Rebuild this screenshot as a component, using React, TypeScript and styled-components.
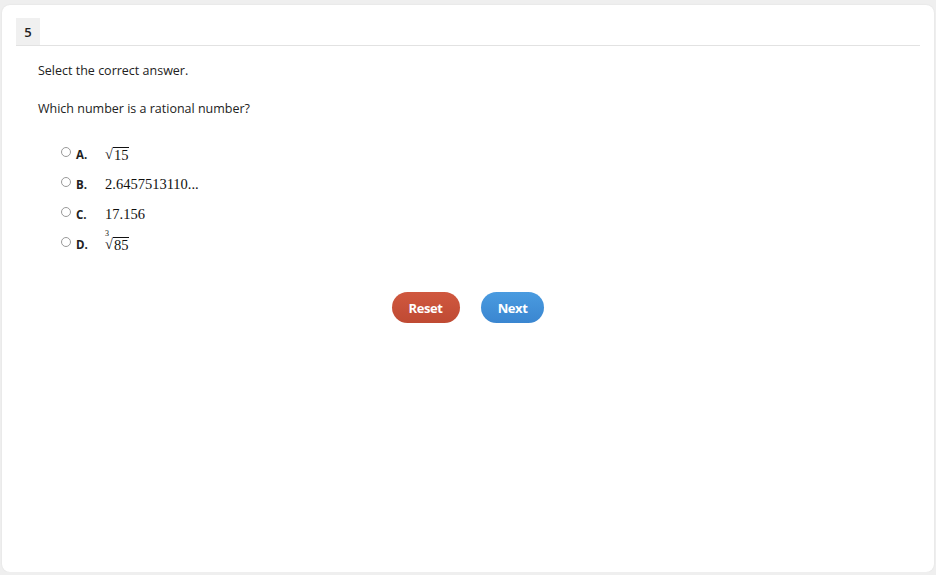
import styled, { createGlobalStyle } from "styled-components";

const GlobalStyle = createGlobalStyle`
  html, body {
    margin: 0;
    padding: 0;
    background: #efefef;
  }
  body {
    font-family: "Open Sans", "Liberation Sans", sans-serif;
    color: #222;
  }
`;

const Card = styled.div`
  margin: 5px 2px 0;
  height: 567px;
  background: #fff;
  border-radius: 8px;
  box-shadow: 0 0 2px rgba(0, 0, 0, 0.08);
  padding: 13px 14px 0;
  box-sizing: border-box;
`;

const Header = styled.div`
  display: flex;
  border-bottom: 1px solid #e2e2e2;
`;

const QNumber = styled.div`
  width: 24px;
  height: 27px;
  background: #f0f0f0;
  font-size: 13px;
  font-weight: 600;
  display: flex;
  align-items: center;
  justify-content: center;
  color: #222;
`;

const Body = styled.div`
  padding: 16px 22px 0;
`;

const Prompt = styled.p`
  margin: 0 0 20px;
  font-size: 12.5px;
  line-height: 18px;
  color: #222;
`;

const Options = styled.div`
  display: flex;
  flex-direction: column;
  gap: 10px;
  padding: 6px 0 0 23px;
`;

const Option = styled.label`
  display: flex;
  align-items: center;
  height: 20px;
`;

const Radio = styled.span`
  width: 10px;
  height: 10px;
  border: 1px solid #9a9a9a;
  border-radius: 50%;
  box-sizing: border-box;
  margin-right: 5px;
  margin-top: -4px;
`;

const Letter = styled.span`
  width: 29px;
  font-size: 11.5px;
  font-weight: 700;
  color: #222;
`;

const MathText = styled.span`
  font-family: "Liberation Serif", "DejaVu Serif", serif;
  font-size: 14.5px;
  color: #111;
  display: inline-flex;
  align-items: flex-end;
  position: relative;
`;

const Radical = styled.span`
  display: inline-block;
`;

const Radicand = styled.span`
  border-top: 1px solid #111;
  padding: 0 1px;
  line-height: 15px;
`;

const RootIndex = styled.span`
  font-size: 8px;
  line-height: 8px;
  position: absolute;
  left: 0;
  top: -6px;
`;

const Actions = styled.div`
  display: flex;
  justify-content: center;
  gap: 21px;
  margin-top: 38px;
`;

const Button = styled.button<{ $tone: "reset" | "next" }>`
  height: 31px;
  padding: 0 17px;
  border: none;
  border-radius: 16px;
  color: #fff;
  font-family: "Open Sans", "Liberation Sans", sans-serif;
  font-size: 13px;
  font-weight: 700;
  letter-spacing: -0.4px;
  background: ${(p) =>
    p.$tone === "reset"
      ? "linear-gradient(#d0583f, #bf4a33)"
      : "linear-gradient(#4a9be0, #3a86d0)"};
`;

function Sqrt({ value, index }: { value: string; index?: string }) {
  return (
    <MathText>
      {index && <RootIndex>{index}</RootIndex>}
      <Radical>√</Radical>
      <Radicand>{value}</Radicand>
    </MathText>
  );
}

export default function App() {
  return (
    <>
      <GlobalStyle />
      <Card>
        <Header>
          <QNumber>5</QNumber>
        </Header>
        <Body>
          <Prompt>Select the correct answer.</Prompt>
          <Prompt>Which number is a rational number?</Prompt>
          <Options>
            <Option>
              <Radio />
              <Letter>A.</Letter>
              <Sqrt value="15" />
            </Option>
            <Option>
              <Radio />
              <Letter>B.</Letter>
              <MathText>2.6457513110...</MathText>
            </Option>
            <Option>
              <Radio />
              <Letter>C.</Letter>
              <MathText>17.156</MathText>
            </Option>
            <Option>
              <Radio />
              <Letter>D.</Letter>
              <Sqrt value="85" index="3" />
            </Option>
          </Options>
          <Actions>
            <Button $tone="reset">Reset</Button>
            <Button $tone="next">Next</Button>
          </Actions>
        </Body>
      </Card>
    </>
  );
}
